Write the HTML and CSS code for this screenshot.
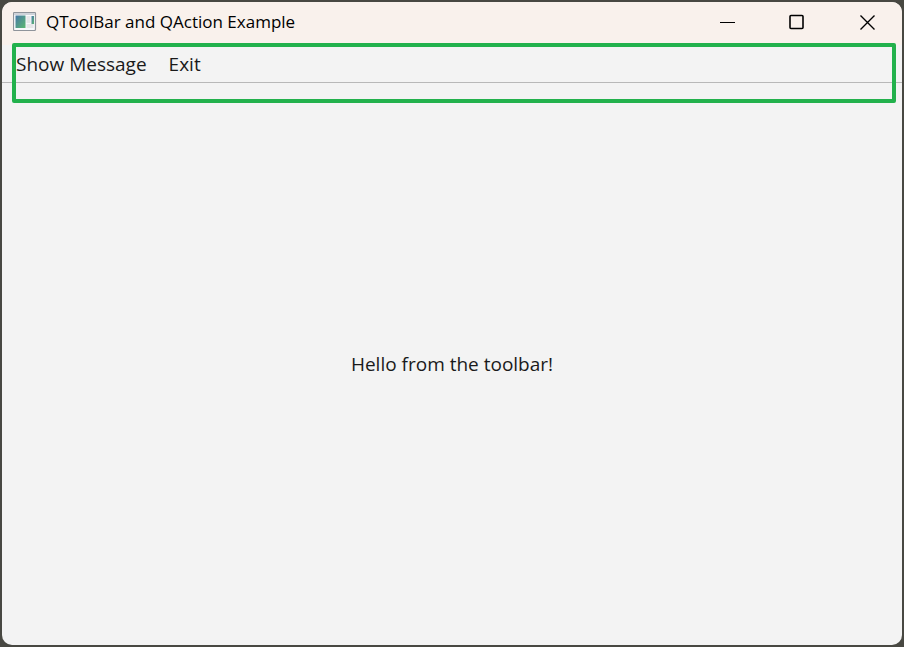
FILE: index.html
```html
<!DOCTYPE html>
<html lang="en">
<head>
  <meta charset="UTF-8">
  <meta name="viewport" content="width=device-width, initial-scale=1.0">
  <title>QToolBar and QAction Example</title>
  <link rel="stylesheet" href="styles.css">
</head>
<body>
  <div class="window">
    <header class="title-bar">
      <svg class="app-icon" width="24" height="20" viewBox="0 0 24 20" aria-hidden="true">
        <defs>
          <linearGradient id="pane" x1="0" y1="0" x2="1" y2="1">
            <stop offset="0" stop-color="#4878a8"/>
            <stop offset="1" stop-color="#5cb870"/>
          </linearGradient>
        </defs>
        <rect x="0.5" y="0.5" width="22" height="18" rx="1" fill="#f8f9fb" stroke="#8f949b" stroke-width="1.2"/>
        <rect x="1" y="1" width="21" height="2" fill="#cfd3da"/>
        <rect x="2.5" y="3.5" width="10" height="12.5" fill="url(#pane)"/>
        <rect x="13.5" y="4" width="4" height="7" fill="#e6e6e8"/>
        <rect x="13.5" y="12" width="7" height="4" fill="#e6e6e8"/>
        <rect x="18.5" y="4" width="2.5" height="8" fill="url(#pane)"/>
      </svg>
      <h1>QToolBar and QAction Example</h1>
      <div class="window-controls">
        <button type="button" aria-label="Minimize">
          <svg width="16" height="16" viewBox="0 0 16 16"><path d="M1 8.5H16"/></svg>
        </button>
        <button type="button" aria-label="Maximize">
          <svg width="16" height="16" viewBox="0 0 16 16"><rect x="1" y="1.5" width="13" height="13" rx="1" stroke-width="1.6"/></svg>
        </button>
        <button type="button" aria-label="Close">
          <svg width="16" height="16" viewBox="0 0 16 16"><path d="M1.5 1.5L15.5 15.5M15.5 1.5L1.5 15.5" stroke-width="1.4"/></svg>
        </button>
      </div>
    </header>
    <nav class="toolbar">
      <button type="button">Show Message</button>
      <button type="button">Exit</button>
    </nav>
    <main>
      <p>Hello from the toolbar!</p>
    </main>
    <div class="highlight"></div>
  </div>
</body>
</html>
```
FILE: styles.css
```css
:root {
  --frame: #484842;
  --title-bg: #f9f1ec;
  --bg: #f3f3f3;
  --highlight: #22b14c;
}

* {
  box-sizing: border-box;
}

body {
  font-family: "Open Sans", "Noto Sans", sans-serif;
  font-size: 19px;
  line-height: 24px;
  margin: 0;
  padding: 2px;
  background: var(--frame);
  color: #1a1a1a;
}

.window {
  position: relative;
  display: flex;
  flex-direction: column;
  min-height: calc(100vh - 4px);
  border-radius: 10px;
  background: var(--bg);
  overflow: hidden;
}

.title-bar {
  display: flex;
  align-items: center;
  height: 43px;
  padding: 0 0 3px 11px;
  background: var(--title-bg);
}

h1 {
  margin: 0 0 0 9px;
  font-size: 17px;
  font-weight: 400;
  color: #000;
}

button {
  padding: 0;
  border: none;
  background: none;
  font: inherit;
  color: inherit;
}

.window-controls {
  display: flex;
  align-self: stretch;
  margin-left: auto;
}

.window-controls button {
  display: flex;
  align-items: center;
  justify-content: center;
  width: 70px;
}

.window-controls svg {
  fill: none;
  stroke: #000;
}

.toolbar {
  display: flex;
  gap: 22px;
  height: 38px;
  padding-left: 14px;
  border-bottom: 1px solid #b8b8b8;
}

main {
  display: flex;
  flex: 1;
  align-items: center;
  justify-content: center;
}

p {
  margin: 0;
}

/* green frame drawn over the toolbar area */
.highlight {
  position: absolute;
  top: 41px;
  left: 10px;
  right: 6px;
  height: 60px;
  border: 4px solid var(--highlight);
  border-radius: 2px;
  pointer-events: none;
}
```
